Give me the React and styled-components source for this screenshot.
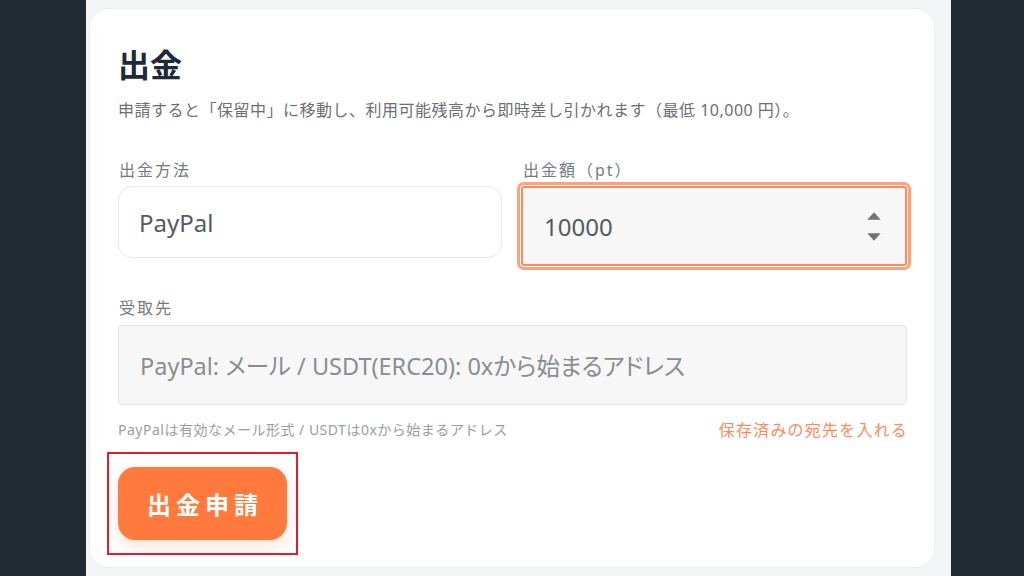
import React from "react";
import styled, { createGlobalStyle } from "styled-components";

const Global = createGlobalStyle`
  html, body { margin: 0; padding: 0; }
  body {
    background: #1f2a33;
    font-family: "Noto Sans", "Noto Sans CJK JP", sans-serif;
  }
  * { box-sizing: border-box; }
`;

const Shell = styled.div`
  width: 1024px;
  height: 576px;
  display: flex;
  background: #1f2a33;
  overflow: hidden;
`;

const Side = styled.div`
  width: ${(p) => p.$w}px;
  flex: none;
  background: #1f2a33;
`;

const Panel = styled.div`
  flex: 1;
  background: #f4f5f7;
  padding: 8px 16px 8px 3px;
  display: flex;
`;

const Card = styled.section`
  flex: 1;
  background: #ffffff;
  border: 1px solid #eceef1;
  border-radius: 20px;
  padding: 34px 27px 0 28px;
  display: flex;
  flex-direction: column;
`;

const Title = styled.h1`
  margin: 0;
  font-family: "Noto Sans CJK JP", sans-serif;
  font-size: 32px;
  line-height: 40px;
  font-weight: 700;
  color: #1e2a35;
`;

const Desc = styled.p`
  margin: 16px 0 0;
  font-family: "Noto Sans", "Noto Sans CJK JP", sans-serif;
  font-size: 16px;
  line-height: 22px;
  letter-spacing: 0.5px;
  color: #6b6f75;
  white-space: nowrap;
`;

const Grid = styled.div`
  display: grid;
  grid-template-columns: 384px 386px;
  column-gap: 19px;
  margin-top: 37px;
`;

const Field = styled.div`
  display: flex;
  flex-direction: column;
  margin-top: ${(p) => p.$mt || 0}px;
`;

const Label = styled.label`
  font-family: "Noto Sans", "Noto Sans CJK JP", sans-serif;
  font-size: 16px;
  line-height: 24px;
  letter-spacing: 2px;
  color: #757a80;
  padding-left: ${(p) => p.$pl || 1}px;
`;

const SelectBox = styled.div`
  margin-top: 4px;
  height: 72px;
  border: 1px solid #e7e8ea;
  border-radius: 14px;
  background: #fff;
  display: flex;
  align-items: center;
  padding-left: 20px;
  font-size: 24px;
  color: #555a60;
`;

const NumberBox = styled.div`
  margin-top: 4px;
  height: 80px;
  border: 2px solid #ff8a5c;
  border-radius: 3px;
  box-shadow: 0 0 0 1px #fff, 0 0 0 4px #ffa27c;
  background: #f7f7f7;
  display: flex;
  align-items: center;
  justify-content: space-between;
  padding: 0 24px 0 21px;
  font-size: 24px;
  color: #555a60;
`;

const Spinner = styled.div`
  display: flex;
  flex-direction: column;
  gap: 13px;
  align-items: center;
`;

const TextBox = styled.div`
  margin-top: 5px;
  height: 80px;
  width: 789px;
  border: 1px solid #e3e4e6;
  border-radius: 4px;
  background: #f7f7f7;
  display: flex;
  align-items: center;
  padding-left: 21px;
  font-family: "Noto Sans", "Noto Sans CJK JP", sans-serif;
  font-feature-settings: "palt";
  font-size: 23.5px;
  color: #8a8d91;
`;

const HelpRow = styled.div`
  width: 789px;
  margin-top: 14px;
  display: flex;
  justify-content: space-between;
  align-items: center;
  line-height: 22px;
  font-family: "Noto Sans", "Noto Sans CJK JP", sans-serif;
`;

const Hint = styled.span`
  font-size: 14px;
  color: #9a9da2;
  letter-spacing: 0.5px;
`;

const LinkText = styled.span`
  font-size: 16px;
  letter-spacing: 1.2px;
  color: #ff8a5c;
  margin-right: -1px;
`;

const ButtonArea = styled.div`
  position: relative;
  margin-top: 26px;
  align-self: flex-start;
`;

const Highlight = styled.div`
  position: absolute;
  left: -11px;
  top: -15px;
  width: 191px;
  height: 103px;
  border: 2px solid #e21c2a;
  pointer-events: none;
`;

const SubmitButton = styled.button`
  display: block;
  width: 169px;
  height: 73px;
  border: none;
  border-radius: 17px;
  background: #ff7a3c;
  color: #fff;
  font-family: "Noto Sans CJK JP", sans-serif;
  font-size: 24px;
  font-weight: 700;
  letter-spacing: 5px;
  padding: 0 0 0 5px;
  box-shadow: 0 6px 14px rgba(255, 122, 60, 0.22);
  cursor: pointer;
`;

export default function App() {
  return (
    <>
      <Global />
      <Shell>
        <Side $w={86} />
        <Panel>
          <Card>
            <Title>出金</Title>
            <Desc>申請すると「保留中」に移動し、利用可能残高から即時差し引かれます（最低 10,000 円）。</Desc>
            <Grid>
              <Field>
                <Label>出金方法</Label>
                <SelectBox>PayPal</SelectBox>
              </Field>
              <Field>
                <Label $pl={2}>出金額（pt）</Label>
                <NumberBox>
                  <span>10000</span>
                  <Spinner>
                    <svg width="14" height="8" viewBox="0 0 14 8">
                      <path d="M7 0.3 L13.7 7.7 H0.3 Z" fill="#727272" />
                    </svg>
                    <svg width="14" height="8" viewBox="0 0 14 8">
                      <path d="M0.3 0.3 H13.7 L7 7.7 Z" fill="#727272" />
                    </svg>
                  </Spinner>
                </NumberBox>
              </Field>
            </Grid>
            <Field $mt={30}>
              <Label>受取先</Label>
              <TextBox>PayPal: メール / USDT(ERC20): 0xから始まるアドレス</TextBox>
            </Field>
            <HelpRow>
              <Hint>PayPalは有効なメール形式 / USDTは0xから始まるアドレス</Hint>
              <LinkText>保存済みの宛先を入れる</LinkText>
            </HelpRow>
            <ButtonArea>
              <Highlight />
              <SubmitButton>出金申請</SubmitButton>
            </ButtonArea>
          </Card>
        </Panel>
        <Side $w={73} />
      </Shell>
    </>
  );
}
